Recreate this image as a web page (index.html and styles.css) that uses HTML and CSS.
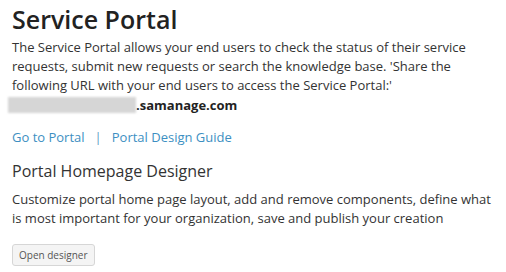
FILE: index.html
```html
<!DOCTYPE html>
<html lang="en">
<head>
    <meta charset="UTF-8">
    <title>Service Portal</title>
    <link rel="stylesheet" href="styles.css">
</head>
<body>
    <div class="portal-settings">
        <h1>Service Portal</h1>
        <p class="intro">The Service Portal allows your end users to check the status of their service requests, submit new requests or search the knowledge base. 'Share the following URL with your end users to access the Service Portal:'</p>
        <div class="portal-url"><span class="masked"></span><strong>.samanage.com</strong></div>

        <div class="links">
            <a href="#">Go to Portal</a>
            <span class="sep">|</span>
            <a href="#">Portal Design Guide</a>
        </div>

        <h2>Portal Homepage Designer</h2>
        <p class="desc">Customize portal home page layout, add and remove components, define what is most important for your organization, save and publish your creation</p>
        <button type="button">Open designer</button>
    </div>
</body>
</html>
```

FILE: styles.css
```css
body {
    font-family: "Open Sans", "Liberation Sans", sans-serif;
    margin: 0;
    padding: 0 12px;
    color: #333;
    background: #fff;
}
h1 {
    font-size: 25px;
    font-weight: 600;
    margin: 0;
    padding-top: 2px;
    line-height: 34px;
    color: #222;
}
.intro {
    font-size: 13px;
    line-height: 19px;
    margin: 2px 0 0;
    color: #333;
}
.portal-url {
    display: flex;
    align-items: center;
    margin-left: -4px;
    height: 19px;
    font-size: 13px;
}
.masked {
    display: inline-block;
    width: 128px;
    height: 16px;
    background: #d6d6d6;
    filter: blur(1px);
}
.portal-url strong {
    font-weight: 700;
    color: #222;
}
.links {
    margin-top: 14px;
    font-size: 13px;
    line-height: 19px;
    display: flex;
    gap: 10px;
}
.links a {
    color: #3d8fc2;
    text-decoration: none;
}
.links .sep {
    color: #5f9cc4;
}
h2 {
    font-size: 16px;
    font-weight: 400;
    margin: 13px 0 0;
    line-height: 22px;
    color: #333;
}
.desc {
    font-size: 13px;
    line-height: 19px;
    margin: 8px 0 0;
}
button {
    margin-top: 16px;
    font-family: inherit;
    font-size: 10px;
    line-height: 16px;
    color: #555;
    background: #f4f4f4;
    border: 1px solid #d6d6d6;
    border-radius: 3px;
    padding: 2px 6px;
    cursor: pointer;
}
```
